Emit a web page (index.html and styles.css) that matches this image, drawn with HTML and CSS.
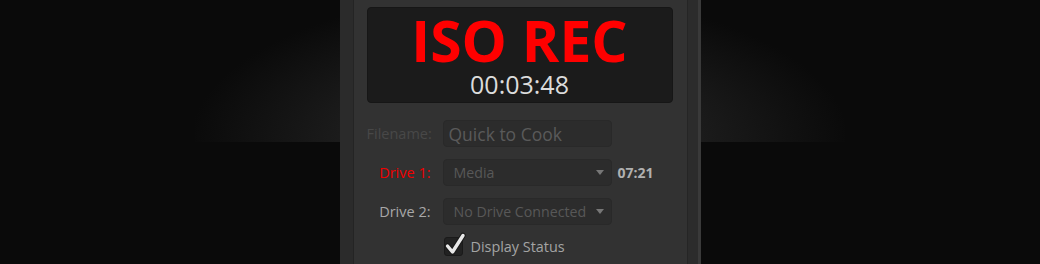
FILE: index.html
```html
<!DOCTYPE html>
<html lang="en">
<head>
    <meta charset="UTF-8">
    <title>ISO Record</title>
    <link rel="stylesheet" href="styles.css">
</head>
<body>
    <div class="stage">
        <div class="panel">
            <div class="rail-left"></div>
            <div class="panel-body">
                <div class="status-box">
                    <div class="status-title">ISO REC</div>
                    <div class="status-time">00:03:48</div>
                </div>
                <div class="form-grid">
                    <label class="field-label disabled">Filename:</label>
                    <div class="field-box input"><span class="field-text">Quick to Cook</span></div>
                    <span></span>

                    <label class="field-label recording">Drive 1:</label>
                    <div class="field-box select"><span class="field-text">Media</span><span class="caret"></span></div>
                    <span class="drive-time">07:21</span>

                    <label class="field-label">Drive 2:</label>
                    <div class="field-box select"><span class="field-text">No Drive Connected</span><span class="caret"></span></div>
                    <span></span>

                    <span></span>
                    <div class="check-row">
                        <span class="checkbox">
                            <svg width="24" height="26" viewBox="0 0 24 26">
                                <path d="M4.5 14 L9.5 20 L20 3.5" fill="none" stroke="#1a1a1a" stroke-width="5.5" stroke-linecap="round" stroke-linejoin="round"/>
                                <path d="M4.5 14 L9.5 20 L20 3.5" fill="none" stroke="#e8e8e8" stroke-width="3.4" stroke-linecap="round" stroke-linejoin="round"/>
                            </svg>
                        </span>
                        <span class="check-label">Display Status</span>
                    </div>
                    <span></span>
                </div>
            </div>
            <div class="rail-right"></div>
        </div>
    </div>
</body>
</html>
```

FILE: styles.css
```css
body {
    margin: 0;
    background-color: #0a0a0a;
    font-family: 'Open Sans', 'Noto Sans', sans-serif;
    overflow: hidden;
}
.stage {
    width: 1040px;
    height: 264px;
    display: flex;
    justify-content: center;
    background:
        radial-gradient(ellipse 330px 150px at 50% 100%, #262626 0%, #1d1d1d 50%, #0a0a0a 100%) center top / 650px 142px no-repeat,
        #0a0a0a;
}
.panel {
    display: flex;
    width: 361px;
    height: 264px;
}
.rail-left {
    width: 13px;
    background-color: #2b2b2b;
    border-right: 1px solid #242424;
}
.panel-body {
    width: 333px;
    box-sizing: border-box;
    background-color: #323232;
    padding: 7px 14px 0 13px;
}
.rail-right {
    width: 10px;
    background-color: #2c2c2c;
    border-left: 1px solid #252525;
    border-right: 3px solid #3a3a3a;
}
.status-box {
    height: 96px;
    box-sizing: border-box;
    background-color: #1b1b1b;
    border: 1px solid #161616;
    border-radius: 4px;
    display: flex;
    flex-direction: column;
    align-items: center;
    padding-top: 8px;
}
.status-title {
    font-size: 57px;
    font-weight: 700;
    line-height: 48px;
    color: #ff0000;
}
.status-time {
    font-size: 25px;
    line-height: 25px;
    margin-top: 8px;
    color: #dcdcdc;
}
.form-grid {
    display: grid;
    grid-template-columns: 64px 169px auto;
    column-gap: 12px;
    row-gap: 12px;
    margin-top: 17px;
    align-items: center;
}
.field-label {
    font-size: 14.5px;
    text-align: right;
    color: #a8a8a8;
    white-space: nowrap;
}
.field-label.disabled {
    color: #484848;
}
.field-label.recording {
    color: #f00000;
}
.field-box {
    height: 27px;
    box-sizing: border-box;
    background-color: #2c2c2c;
    border: 1px solid #292929;
    border-radius: 4px;
    display: flex;
    align-items: center;
    justify-content: space-between;
    padding: 0 7px 0 10px;
}
.field-box.input {
    padding-left: 5px;
}
.field-text {
    font-size: 14.2px;
    color: #585858;
    white-space: nowrap;
}
.field-box.input .field-text {
    font-size: 17.5px;
    color: #5a5a5a;
}
.caret {
    width: 0;
    height: 0;
    border-left: 4.5px solid transparent;
    border-right: 4.5px solid transparent;
    border-top: 5px solid #777777;
}
.drive-time {
    font-size: 14px;
    font-weight: 700;
    color: #b0b0b0;
    margin-left: -6px;
}
.check-row {
    display: flex;
    align-items: center;
    gap: 8px;
    height: 20px;
    margin-top: -1px;
}
.checkbox {
    position: relative;
    width: 19px;
    height: 19px;
    box-sizing: border-box;
    margin-left: 1px;
    background-color: #222222;
    border: 1px solid #1a1a1a;
    border-radius: 3px;
}
.checkbox svg {
    position: absolute;
    left: -2px;
    top: -6px;
}
.check-label {
    font-size: 14.4px;
    color: #a4a4a4;
}
```
